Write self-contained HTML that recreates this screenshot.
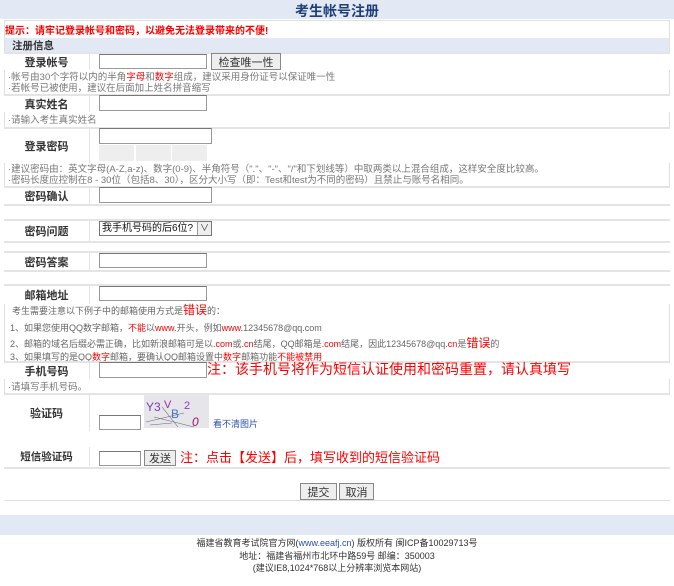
<!DOCTYPE html>
<html><head><meta charset="utf-8"><style>
*{margin:0;padding:0;box-sizing:border-box}
body{width:674px;height:586px;background:#fff;font-family:"Liberation Sans","Noto Sans CJK SC",sans-serif;font-size:10px;color:#333;position:relative;overflow:hidden}
.a{position:absolute}
.bar{background:#e3e9f4}
.row{position:absolute;left:4px;width:666px;border-top:2px solid #e4e4e4;background:#fff}
.lab{position:absolute;left:0;width:86px;top:0;bottom:0;border-right:1px solid #e4e4e4;font-weight:bold;font-size:11px;color:#333;display:flex;align-items:center;justify-content:center}
.inp{position:absolute;height:15px;border:1px solid #999;background:#fff;border-top-color:#777}
.btn{position:absolute;background:#eee;border:1px solid #888;font-size:11px;color:#333;display:flex;align-items:center;justify-content:center}
.hint{position:absolute;left:8px;color:#777;font-size:9.5px;line-height:11px}
.r{color:#f00}
</style></head><body>
<div class="a bar" style="left:0;top:0;width:674px;height:19px"></div>
<div class="a" style="left:0;top:1px;width:674px;text-align:center;font-size:14px;font-weight:bold;color:#1d3f7a">考生帐号注册</div>
<div class="a" style="left:4px;top:20px;width:666px;height:481px;border:1px solid #e0e0e0"></div>
<div class="a" style="left:5px;top:22px;font-size:10px;font-weight:bold;color:#f00">提示：请牢记登录帐号和密码，以避免无法登录带来的不便!</div>
<div class="a bar" style="left:5px;top:38px;width:664px;height:14px"></div>
<div class="a" style="left:12px;top:38px;font-size:10.5px;font-weight:bold;color:#333">注册信息</div>

<div class="row" style="top:52px;height:18px"><div class="lab">登录帐号</div></div>
<div class="inp" style="left:99px;top:54px;width:108px"></div>
<div class="btn" style="left:211px;top:53px;width:70px;height:17px">检查唯一性</div>
<div class="hint" style="top:72px">·帐号由30个字符以内的半角<span class="r">字母</span>和<span class="r">数字</span>组成，建议采用身份证号以保证唯一性<br>·若帐号已被使用，建议在后面加上姓名拼音缩写</div>

<div class="row" style="top:94px;height:18px"><div class="lab">真实姓名</div></div>
<div class="inp" style="left:99px;top:95px;width:108px;height:16px"></div>
<div class="hint" style="top:115px">·请输入考生真实姓名</div>

<div class="row" style="top:127px;height:36px"><div class="lab">登录密码</div></div>
<div class="inp" style="left:99px;top:128px;width:113px;height:16px"></div>
<div class="a" style="left:99px;top:145px;width:35px;height:16px;background:#eee"></div>
<div class="a" style="left:136px;top:145px;width:35px;height:16px;background:#eee"></div>
<div class="a" style="left:172px;top:145px;width:35px;height:16px;background:#eee"></div>
<div class="hint" style="top:164px">·建议密码由：英文字母(A-Z,a-z)、数字(0-9)、半角符号（"."、"-"、"/"和下划线等）中取两类以上混合组成，这样安全度比较高。<br>·密码长度应控制在8 - 30位（包括8、30），区分大小写（即：Test和test为不同的密码）且禁止与账号名相同。</div>

<div class="row" style="top:186px;height:18px"><div class="lab">密码确认</div></div>
<div class="inp" style="left:99px;top:187px;width:113px;height:16px"></div>
<div class="row" style="top:204px;height:15px"></div>
<div class="row" style="top:219px;height:22px"><div class="lab">密码问题</div></div>
<div class="a" style="left:99px;top:221px;width:113px;height:15px;border:1px solid #777;font-size:10px;line-height:13px;padding-left:2px;color:#111;overflow:hidden;white-space:nowrap">我手机号码的后6位?</div>
<div class="a" style="left:197px;top:222px;width:14px;height:13px;background:#eee;border-left:1px solid #999;font-size:9px;text-align:center;line-height:13px">∨</div>
<div class="row" style="top:241px;height:11px"></div>
<div class="row" style="top:251px;height:19px"><div class="lab">密码答案</div></div>
<div class="inp" style="left:99px;top:253px;width:108px"></div>
<div class="row" style="top:270px;height:14px"></div>
<div class="row" style="top:284px;height:20px"><div class="lab">邮箱地址</div></div>
<div class="inp" style="left:99px;top:286px;width:108px"></div>
<div class="a" style="left:12px;top:305px;color:#666;font-size:9px;line-height:11px">考生需要注意以下例子中的邮箱使用方式是<span class="r" style="font-size:12px">错误</span>的：</div>
<div class="a" style="left:10px;top:321px;color:#666;font-size:9px">1、如果您使用QQ数字邮箱，<span class="r">不能</span>以<span class="r">www.</span>开头，例如<span class="r">www.</span>12345678@qq.com</div>
<div class="a" style="left:10px;top:337px;color:#666;font-size:9px;line-height:12px">2、邮箱的域名后缀必需正确，比如新浪邮箱可是以<span class="r">.com</span>或<span class="r">.cn</span>结尾，QQ邮箱是<span class="r">.com</span>结尾，因此12345678@qq<span class="r">.cn</span>是<span class="r" style="font-size:12px">错误</span>的</div>
<div class="a" style="left:10px;top:350px;color:#666;font-size:9px">3、如果填写的是QQ<span class="r">数字</span>邮箱，要确认QQ邮箱设置中<span class="r">数字</span>邮箱功能<span class="r">不能被禁用</span></div>

<div class="row" style="top:361px;height:18px"><div class="lab">手机号码</div></div>
<div class="inp" style="left:99px;top:362px;width:108px;height:16px"></div>
<div class="a" style="left:207px;top:361px;font-size:14px;color:#f00;line-height:17px">注：该手机号将作为短信认证使用和密码重置，请认真填写</div>
<div class="hint" style="top:382px">·请填写手机号码。</div>

<div class="row" style="top:393px;height:38px"><div class="lab">验证码</div></div>
<div class="row" style="top:431px;height:36px;border-top:none"></div>
<svg class="a" style="left:144px;top:395px" width="65" height="33" viewBox="0 0 65 33"><rect width="65" height="33" fill="#e6e6ea"/><text x="2" y="16" font-size="12" fill="#7a3fb0" font-family="Liberation Sans">Y3</text><text x="20" y="13" font-size="11" fill="#9b2f9b" font-family="Liberation Sans">V</text><text x="27" y="23" font-size="12" fill="#4a6fd0" font-family="Liberation Sans">B</text><text x="40" y="14" font-size="11" fill="#8a3fc0" font-family="Liberation Sans">2</text><text x="48" y="31" font-size="12" font-style="italic" fill="#a01070" font-family="Liberation Sans">0</text><path d="M2 27L40 18M18 12L34 32M6 30L28 28M10 22L50 32" stroke="#667" stroke-width=".6" fill="none"/></svg>
<div class="inp" style="left:99px;top:415px;width:42px;height:15px"></div>
<div class="a" style="left:213px;top:419px;color:#2a4fb0;font-size:9px;line-height:11px">看不清图片</div>
<div class="a" style="left:4px;top:447px;width:86px;height:19px;border-right:1px solid #e4e4e4;font-weight:bold;font-size:10.5px;display:flex;align-items:center;justify-content:center">短信验证码</div>
<div class="inp" style="left:99px;top:451px;width:42px;height:15px"></div>
<div class="btn" style="left:144px;top:450px;width:32px;height:16px">发送</div>
<div class="a" style="left:180px;top:450px;font-size:13px;color:#f00;line-height:16px">注：点击【发送】后，填写收到的短信验证码</div>
<div class="row" style="top:467px;height:33px"></div>
<div class="btn" style="left:300px;top:483px;width:37px;height:17px">提交</div>
<div class="btn" style="left:339px;top:483px;width:35px;height:17px">取消</div>

<div class="a bar" style="left:0;top:515px;width:674px;height:20px"></div>
<div class="a" style="left:0;top:537px;width:674px;text-align:center;font-size:9px;line-height:12.5px;color:#333">福建省教育考试院官方网(<span style="color:#2a4fb0">www.eeafj.cn</span>) 版权所有 闽ICP备10029713号<br>地址：福建省福州市北环中路59号 邮编：350003<br>(建议IE8,1024*768以上分辨率浏览本网站)</div>
</body></html>
